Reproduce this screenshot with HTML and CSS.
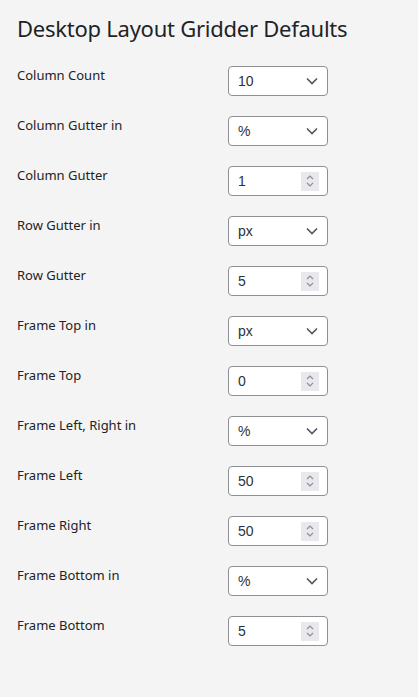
FILE: index.html
```html
<!DOCTYPE html>
<html>
<head>
<meta charset="utf-8">
<link rel="stylesheet" href="styles.css">
</head>
<body>
<div class="page">
  <h2 class="title">Desktop Layout Gridder Defaults</h2>
  <div class="form">
    <div class="row"><div class="label">Column Count</div><div class="field select"><span>10</span><svg class="chev" width="12" height="8" viewBox="0 0 12 8"><path d="M1 1.5 L6 6.5 L11 1.5" fill="none" stroke="#50575e" stroke-width="1.6"/></svg></div></div>
    <div class="row"><div class="label">Column Gutter in</div><div class="field select"><span>%</span><svg class="chev" width="12" height="8" viewBox="0 0 12 8"><path d="M1 1.5 L6 6.5 L11 1.5" fill="none" stroke="#50575e" stroke-width="1.6"/></svg></div></div>
    <div class="row"><div class="label">Column Gutter</div><div class="field number"><span>1</span><span class="spin"><svg width="10" height="14" viewBox="0 0 10 14"><path d="M2 5 L5 2 L8 5 M2 9 L5 12 L8 9" fill="none" stroke="#8c8f94" stroke-width="1.2"/></svg></span></div></div>
    <div class="row"><div class="label">Row Gutter in</div><div class="field select"><span>px</span><svg class="chev" width="12" height="8" viewBox="0 0 12 8"><path d="M1 1.5 L6 6.5 L11 1.5" fill="none" stroke="#50575e" stroke-width="1.6"/></svg></div></div>
    <div class="row"><div class="label">Row Gutter</div><div class="field number"><span>5</span><span class="spin"><svg width="10" height="14" viewBox="0 0 10 14"><path d="M2 5 L5 2 L8 5 M2 9 L5 12 L8 9" fill="none" stroke="#8c8f94" stroke-width="1.2"/></svg></span></div></div>
    <div class="row"><div class="label">Frame Top in</div><div class="field select"><span>px</span><svg class="chev" width="12" height="8" viewBox="0 0 12 8"><path d="M1 1.5 L6 6.5 L11 1.5" fill="none" stroke="#50575e" stroke-width="1.6"/></svg></div></div>
    <div class="row"><div class="label">Frame Top</div><div class="field number"><span>0</span><span class="spin"><svg width="10" height="14" viewBox="0 0 10 14"><path d="M2 5 L5 2 L8 5 M2 9 L5 12 L8 9" fill="none" stroke="#8c8f94" stroke-width="1.2"/></svg></span></div></div>
    <div class="row"><div class="label">Frame Left, Right in</div><div class="field select"><span>%</span><svg class="chev" width="12" height="8" viewBox="0 0 12 8"><path d="M1 1.5 L6 6.5 L11 1.5" fill="none" stroke="#50575e" stroke-width="1.6"/></svg></div></div>
    <div class="row"><div class="label">Frame Left</div><div class="field number"><span>50</span><span class="spin"><svg width="10" height="14" viewBox="0 0 10 14"><path d="M2 5 L5 2 L8 5 M2 9 L5 12 L8 9" fill="none" stroke="#8c8f94" stroke-width="1.2"/></svg></span></div></div>
    <div class="row"><div class="label">Frame Right</div><div class="field number"><span>50</span><span class="spin"><svg width="10" height="14" viewBox="0 0 10 14"><path d="M2 5 L5 2 L8 5 M2 9 L5 12 L8 9" fill="none" stroke="#8c8f94" stroke-width="1.2"/></svg></span></div></div>
    <div class="row"><div class="label">Frame Bottom in</div><div class="field select"><span>%</span><svg class="chev" width="12" height="8" viewBox="0 0 12 8"><path d="M1 1.5 L6 6.5 L11 1.5" fill="none" stroke="#50575e" stroke-width="1.6"/></svg></div></div>
    <div class="row"><div class="label">Frame Bottom</div><div class="field number"><span>5</span><span class="spin"><svg width="10" height="14" viewBox="0 0 10 14"><path d="M2 5 L5 2 L8 5 M2 9 L5 12 L8 9" fill="none" stroke="#8c8f94" stroke-width="1.2"/></svg></span></div></div>
  </div>
</div>
</body>
</html>
```
FILE: styles.css
```css
html, body {
  margin: 0;
  padding: 0;
  background: #f4f4f4;
  height: 100%;
}
body {
  font-family: "Noto Sans", "Open Sans", sans-serif;
  color: #1d2327;
}
.page {
  padding: 14px 0 0 17px;
}
.title {
  margin: 0;
  font-size: 22px;
  font-weight: 400;
  line-height: 28px;
  letter-spacing: -0.25px;
}
.form {
  margin-top: 24px;
  display: flex;
  flex-direction: column;
  gap: 20px;
}
.row {
  display: grid;
  grid-template-columns: 211px 100px;
  align-items: start;
}
.label {
  font-size: 13px;
  line-height: 18px;
  padding-top: 0;
  letter-spacing: 0;
}
.field {
  box-sizing: border-box;
  height: 30px;
  border: 1px solid #8c8f94;
  border-radius: 4px;
  background: #fff;
  display: flex;
  align-items: center;
  justify-content: space-between;
  padding: 0 8px 0 9px;
  font-size: 14px;
  font-family: "Liberation Sans", Arial, sans-serif;
  color: #2c3338;
}
.select .chev {
  margin-right: 1px;
}
.spin {
  width: 18px;
  height: 19px;
  background: #e9e9ed;
  display: flex;
  align-items: center;
  justify-content: center;
  margin-right: 0;
}
```
